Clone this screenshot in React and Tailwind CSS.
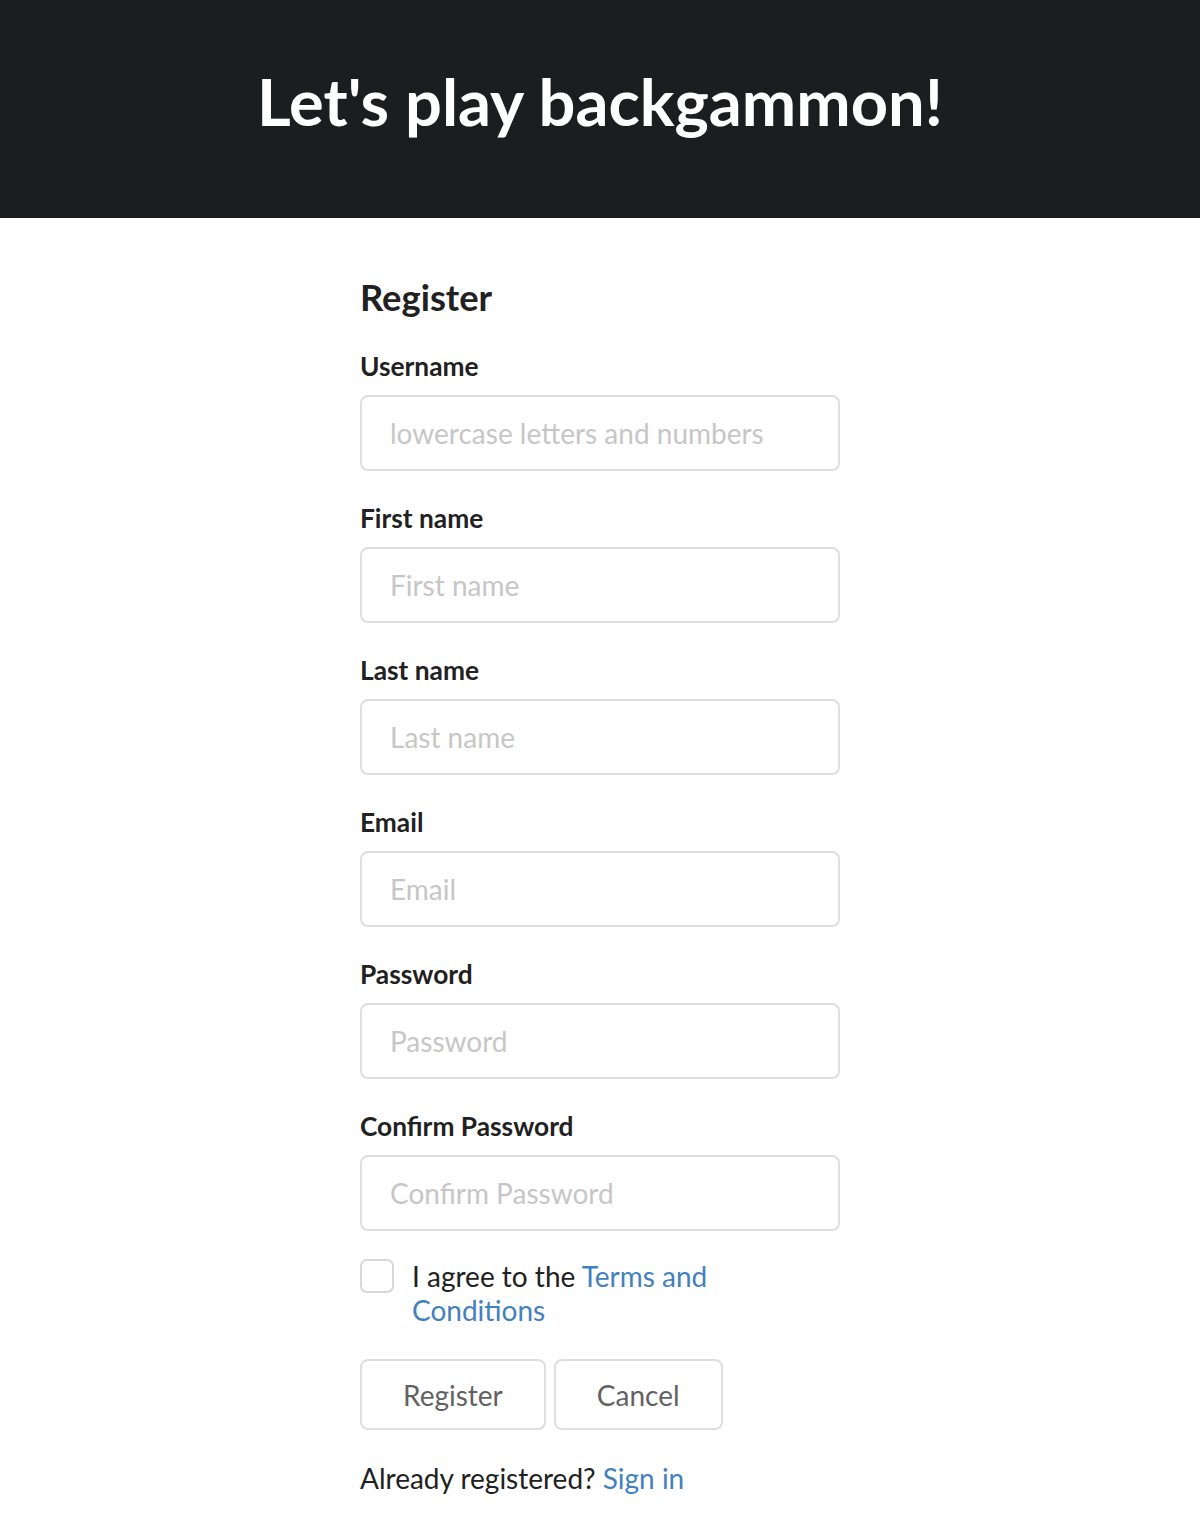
import React from "react";

const fields = [
  { label: "Username", placeholder: "lowercase letters and numbers", type: "text" },
  { label: "First name", placeholder: "First name", type: "text" },
  { label: "Last name", placeholder: "Last name", type: "text" },
  { label: "Email", placeholder: "Email", type: "email" },
  { label: "Password", placeholder: "Password", type: "password" },
  { label: "Confirm Password", placeholder: "Confirm Password", type: "password" },
];

function Field({ label, placeholder, type }) {
  return (
    <div className="mb-[29px] flex flex-col">
      <label className="mb-[10px] block text-[26.3px] leading-[37px] font-bold text-[#212121]">
        {label}
      </label>
      <input
        type={type}
        placeholder={placeholder}
        className="h-[76px] w-full rounded-[8px] border-2 border-[#dedede] bg-white px-[28px] text-[28px] leading-[34px] text-[#212121] outline-none placeholder:text-[#c6c6c6]"
      />
    </div>
  );
}

export default function App() {
  return (
    <div className="min-h-screen bg-white font-['Lato','Liberation_Sans',sans-serif]">
      <header className="h-[218px] bg-[#1c1d1f] pt-[69px] text-center">
        <h1 className="text-[65px] leading-[65px] font-bold text-white">Let's play backgammon!</h1>
      </header>

      <main className="mx-auto w-[480px] pt-[56px] pb-[32px]">
        <h3 className="mb-[28px] text-[36.3px] leading-[46px] font-bold text-[#212121]">Register</h3>

        <form onSubmit={(e) => e.preventDefault()}>
          {fields.map((f) => (
            <Field key={f.label} {...f} />
          ))}

          <div className="mt-[-1px] flex items-start">
            <span className="h-[34px] w-[34px] shrink-0 rounded-[7px] border-2 border-[#d8d8d8] bg-white" />
            <p className="ml-[18px] w-[400px] text-[28px] leading-[34px] text-[#212121]">
              I agree to the <a href="#" className="text-[#4380bf]">Terms and Conditions</a>
            </p>
          </div>

          <div className="mt-[32px] flex gap-[8px]">
            <button
              type="submit"
              className="h-[71px] rounded-[8px] border-2 border-[#dedede] bg-white px-[41px] text-[28px] leading-[28px] text-[#626262]"
            >
              Register
            </button>
            <button
              type="button"
              className="h-[71px] rounded-[8px] border-2 border-[#dedede] bg-white px-[41px] text-[28px] leading-[28px] text-[#626262]"
            >
              Cancel
            </button>
          </div>
        </form>

        <p className="mt-[28px] text-[28px] leading-[40px] text-[#212121]">
          Already registered? <a href="#" className="text-[#4380bf]">Sign in</a>
        </p>
      </main>
    </div>
  );
}
